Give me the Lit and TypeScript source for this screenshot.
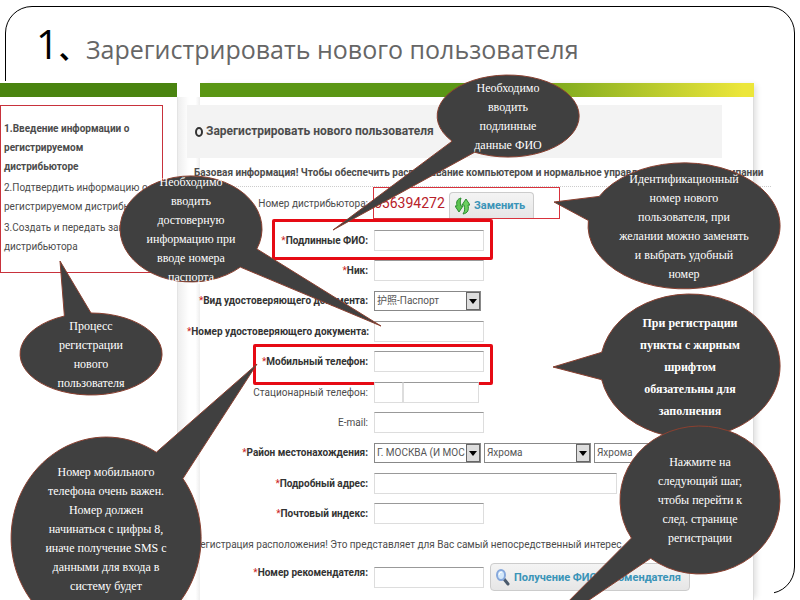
import { LitElement, html, css, svg, nothing } from "lit";
import { customElement } from "lit/decorators.js";
import { classMap } from "lit/directives/class-map.js";

interface Callout {
  cx: number;
  cy: number;
  rx: number;
  ry: number;
  tip: [number, number];
  from: number;
  to: number;
  textY: number;
  strong?: boolean;
  lines: string[];
}

const CALLOUTS: Callout[] = [
  { cx: 508, cy: 116, rx: 71, ry: 41, tip: [333, 230], from: 142, to: 118, textY: 117,
    lines: ["Необходимо", "вводить", "подлинные", "данные ФИО"] },
  { cx: 191, cy: 229, rx: 71, ry: 53, tip: [381, 326], from: 46, to: 22, textY: 230,
    lines: ["Необходимо", "вводить", "достоверную", "информацию при", "вводе номера", "паспорта"] },
  { cx: 91, cy: 354, rx: 71, ry: 41, tip: [60, 261], from: 248, to: 270, textY: 355,
    lines: ["Процесс", "регистрации", "нового", "пользователя"] },
  { cx: 106, cy: 538, rx: 95, ry: 101, tip: [257, 364], from: 302, to: 324, textY: 529,
    lines: ["Номер мобильного", "телефона очень важен.", "Номер должен", "начинаться с цифры 8,",
      "иначе получение SMS с", "данными для входа в", "систему будет"] },
  { cx: 684, cy: 226, rx: 96, ry: 63, tip: [554, 202], from: 185, to: 208, textY: 227,
    lines: ["Идентификационный", "номер нового", "пользователя, при", "желании можно заменять",
      "и выбрать удобный", "номер"] },
  { cx: 690, cy: 366, rx: 90, ry: 72, tip: [553, 367], from: 169, to: 191, textY: 367, strong: true,
    lines: ["При регистрации", "пункты с жирным", "шрифтом", "обязательны для", "заполнения"] },
  { cx: 700, cy: 500, rx: 80, ry: 74, tip: [530, 640], from: 149, to: 128, textY: 500,
    lines: ["Нажмите на", "следующий шаг,", "чтобы перейти к", "след. странице", "регистрации"] },
];

/* Outline of an ellipse whose rim opens between two angles into a pointed tail. */
function calloutPath(c: Callout): string {
  const at = (deg: number) => {
    const a = (deg * Math.PI) / 180;
    return `${(c.cx + c.rx * Math.cos(a)).toFixed(1)} ${(c.cy + c.ry * Math.sin(a)).toFixed(1)}`;
  };
  const lo = Math.min(c.from, c.to);
  const hi = Math.max(c.from, c.to);
  return `M${c.tip[0]} ${c.tip[1]} L${at(hi)} A${c.rx} ${c.ry} 0 1 1 ${at(lo)} Z`;
}

@customElement("callout-layer")
export class CalloutLayer extends LitElement {
  static styles = css`
    :host {
      position: absolute;
      inset: 0;
      overflow: hidden;
      pointer-events: none;
    }
    .shapes {
      position: absolute;
      inset: 0;
      width: 100%;
      height: 100%;
    }
    .shape {
      fill: #404040;
      stroke: #8a4030;
      stroke-width: 1;
    }
    .note {
      position: absolute;
      transform: translate(-50%, -50%);
      color: #fff;
      font: 12px/19px "Liberation Serif", serif;
      text-align: center;
      white-space: nowrap;
    }
    .strong {
      line-height: 22px;
      font-weight: bold;
    }
    .line {
      display: block;
    }
  `;

  render() {
    return CALLOUTS.map(
      (c) => html`
        <svg class="shapes" aria-hidden="true">${svg`<path class="shape" d=${calloutPath(c)}></path>`}</svg>
        <div class=${classMap({ note: true, strong: !!c.strong })} style="left:${c.cx}px;top:${c.textY}px">
          ${c.lines.map((l) => html`<span class="line">${l}</span>`)}
        </div>
      `
    );
  }
}

@customElement("app-root")
export class AppRoot extends LitElement {
  static styles = css`
    :host {
      display: block;
      position: relative;
      height: 100vh;
      min-height: 600px;
      overflow: hidden;
      background: #fff;
      color: #4c4c4c;
      font: 10px/19px Roboto, sans-serif;
    }
    * {
      box-sizing: border-box;
    }
    .frame {
      position: absolute;
      inset: 6px 5px;
      border: 1px solid #000;
      border-radius: 27px;
    }
    .head {
      position: relative;
      display: flex;
      align-items: center;
      height: 81px;
      padding: 12px 36px 0;
    }
    .title {
      margin: 0;
      display: flex;
      align-items: baseline;
      font: 25px/44px "Open Sans", sans-serif;
      color: #666;
      white-space: nowrap;
    }
    .num {
      width: 50px;
      color: #000;
      font-size: 40px;
    }
    .mark {
      font-family: "Noto Sans CJK SC", sans-serif;
      font-size: 26px;
      font-weight: bold;
    }
    .sheet {
      position: relative;
      display: flex;
      align-items: stretch;
      min-height: 519px;
      margin-right: 26px;
      padding-top: 2px;
      background: #fff;
    }
    .side {
      width: 177px;
      flex: none;
    }
    .sidebar {
      height: 14px;
      background: #4a8410;
    }
    .steps {
      list-style: none;
      margin: 8px 0 0;
      width: 163px;
      height: 168px;
      padding: 13px 3px;
      display: flex;
      flex-direction: column;
      gap: 2px;
      border: 1px solid #c8323c;
      white-space: nowrap;
    }
    .current {
      font-weight: bold;
    }
    .gutter {
      width: 23px;
      flex: none;
      margin-top: 14px;
      border-left: 1px solid #e4e4e4;
      background: linear-gradient(90deg, #eee, #fff 50%, #fff 80%, #eee);
    }
    .main {
      flex: 1;
      min-width: 0;
      margin-right: 20px;
      border-right: 1px solid #ddd;
      box-shadow: 4px 0 6px -2px #ddd;
    }
    .bar {
      height: 14px;
      margin-right: -1px;
      background: linear-gradient(90deg, #5a9614, #5a9614 52%, #ece63a 98%);
    }
    .form {
      margin: 8px 0 0 -13px;
    }
    .heading {
      margin: 0 31px 0 0;
      height: 53px;
      padding-left: 8px;
      display: flex;
      align-items: center;
      gap: 3px;
      background: #f3f3f3;
      font-size: 12px;
      white-space: nowrap;
    }
    .ring {
      width: 8px;
      height: 10px;
      border: 2px solid #333;
      border-radius: 50%;
    }
    .info {
      height: 29px;
      margin: 0 -18px 0 7px;
      line-height: 29px;
      border-bottom: 1px dotted #ccc;
      font-weight: bold;
      white-space: nowrap;
    }
    .row {
      display: flex;
      align-items: center;
      gap: 6px;
      position: relative;
    }
    .label {
      width: 181px;
      flex: none;
      text-align: right;
      white-space: nowrap;
    }
    .req {
      font-weight: bold;
      color: #333;
    }
    .star {
      color: #c22;
      font-weight: normal;
    }
    .rows {
      display: grid;
      grid-template-rows: repeat(10, 1fr);
      height: 304px;
      margin-top: 6px;
    }
    .idrow {
      height: 32px;
    }
    .idbox {
      width: 187px;
      height: 32px;
      display: flex;
      align-items: center;
      gap: 3px;
      border: 1px solid #d8323c;
      margin-left: -1px;
    }
    .id {
      width: 72px;
      font-size: 14px;
      color: #b8202a;
    }
    .btn {
      display: flex;
      align-items: center;
      gap: 4px;
      height: 28px;
      padding: 0 8px 0 5px;
      border: 1px solid #ccc;
      border-radius: 4px;
      background: linear-gradient(#f4f4f4, #e6e6e6);
      color: #3a94b8;
      font: bold 11px/19px Roboto, sans-serif;
      white-space: nowrap;
    }
    .small {
      height: 26px;
      align-self: flex-end;
      border-bottom: 0;
      border-radius: 4px 4px 0 0;
    }
    .field {
      width: 110px;
      height: 21px;
      border: 1px solid #ddd;
      border-top-color: #999;
      background: #fff;
      padding: 0 3px;
      font: inherit;
    }
    .wide {
      width: 243px;
    }
    .code {
      width: 29px;
      margin-right: -6px;
    }
    .line {
      width: 76px;
    }
    .pick {
      position: relative;
      display: flex;
      width: 107px;
      margin-right: -3px;
    }
    .select {
      appearance: none;
      width: 100%;
      height: 20px;
      padding: 0 15px 0 2px;
      border: 1px solid #888;
      border-radius: 0;
      background: #fff;
      color: #555;
      font: 10px/18px Roboto, "Noto Sans CJK SC", sans-serif;
    }
    .arrow {
      position: absolute;
      right: 1px;
      top: 1px;
      width: 14px;
      height: 18px;
      border: 1px solid #666;
      background: #ddd;
    }
    .box {
      position: absolute;
      top: -6px;
      left: 85px;
      width: 221px;
      height: 41px;
      border: 3px solid #e60a14;
      border-radius: 2px;
      pointer-events: none;
    }
    .boxwide {
      top: -3px;
      left: 66px;
      width: 240px;
    }
    .notice {
      margin: 0 0 0 7px;
      line-height: 32px;
      white-space: nowrap;
    }
    .ref {
      height: 32px;
    }
    .ref .label {
      align-self: flex-start;
      line-height: 24px;
    }
  `;

  private label(id: string, text: string, req = true) {
    return html`<label class=${classMap({ label: true, req })} for=${id}
      >${req ? html`<span class="star">*</span>` : nothing}${text}</label
    >`;
  }

  private field(id: string, text: string, req = true, wide = false) {
    return html`<div class="row">
      ${this.label(id, text, req)}<input id=${id} class=${classMap({ field: true, wide })} type="text" />
    </div>`;
  }

  private pick(id: string, value: string, name: string) {
    return html`<span class="pick">
      <select class="select" id=${id} aria-label=${name}><option>${value}</option></select>
      <svg class="arrow" viewBox="0 0 12 16" aria-hidden="true"><path d="M2 6h8l-4 5z" fill="#000" /></svg>
    </span>`;
  }

  render() {
    return html`
      <div class="frame"></div>
      <header class="head">
        <h1 class="title">
          <span class="num">1<span class="mark">、</span></span>Зарегистрировать нового пользователя
        </h1>
      </header>
      <div class="sheet">
        <aside class="side">
          <div class="sidebar"></div>
          <ol class="steps">
            <li class="current">1.Введение информации о<br />регистрируемом<br />дистрибьюторе</li>
            <li>2.Подтвердить информацию о<br />регистрируемом дистрибьюторе</li>
            <li>3.Создать и передать заказ<br />дистрибьютора</li>
          </ol>
        </aside>
        <div class="gutter"></div>
        <main class="main">
          <div class="bar"></div>
          <form class="form">
            <h2 class="heading"><span class="ring"></span>Зарегистрировать нового пользователя</h2>
            <div class="info">
              Базовая информация! Чтобы обеспечить распознавание компьютером и нормальное управление данными о компании
            </div>
            <div class="row idrow">
              <span class="label">Номер дистрибьютора:</span>
              <div class="idbox">
                <span class="id">656394272</span>
                <button class="btn small" type="button">
                  <svg width="15" height="18" viewBox="0 0 15 18" aria-hidden="true">
                    <path d="M6 1C2 2 1 5 2 9L0 9l4 6 4-6-2 0C5 6 5 4 6 1z" fill="#5cc450" stroke="#2c8c30" stroke-linejoin="round" />
                    <path d="M8 17c5-1 6-4 5-9l2 0-4-6-4 6 2 0c1 4 1 6-1 9z" fill="#6cd060" stroke="#2c8c30" stroke-linejoin="round" />
                  </svg>
                  Заменить
                </button>
              </div>
            </div>
            <div class="rows">
              <div class="row">
                ${this.label("fio", "Подлинные ФИО:")}<input id="fio" class="field" type="text" />
                <span class="box"></span>
              </div>
              ${this.field("nick", "Ник:")}
              <div class="row">
                ${this.label("doc", "Вид удостоверяющего документа:")}${this.pick("doc", "护照-Паспорт", "Вид документа")}
              </div>
              ${this.field("docnum", "Номер удостоверяющего документа:")}
              <div class="row">
                ${this.label("mobile", "Мобильный телефон:")}<input id="mobile" class="field" type="text" />
                <span class="box boxwide"></span>
              </div>
              <div class="row">
                ${this.label("tel", "Стационарный телефон:", false)}
                <input id="tel" class="field code" type="text" />
                <input class="field line" type="text" aria-label="Номер" />
              </div>
              ${this.field("email", "E-mail:", false)}
              <div class="row">
                ${this.label("region", "Район местонахождения:")}${this.pick("region", "Г. МОСКВА (И МОС", "Регион")}
                ${this.pick("city", "Яхрома", "Город")}${this.pick("town", "Яхрома", "Населённый пункт")}
              </div>
              ${this.field("address", "Подробный адрес:", true, true)}
              ${this.field("zip", "Почтовый индекс:")}
            </div>
            <p class="notice">Регистрация расположения! Это представляет для Вас самый непосредственный интерес</p>
            <div class="row ref">
              ${this.label("ref", "Номер рекомендателя:")}<input id="ref" class="field" type="text" />
              <button class="btn" type="button">
                <svg width="14" height="18" viewBox="0 0 14 18" aria-hidden="true">
                  <path d="M8 11l4 5" stroke="#4a5a6c" stroke-width="3" stroke-linecap="round" />
                  <ellipse cx="5" cy="7" rx="4" ry="5" fill="#d4e8fa" stroke="#86a8dc" stroke-width="2" />
                  <path d="M3 7a3 3 0 0 1 3-3" fill="none" stroke="#fff" />
                </svg>
                Получение ФИО рекомендателя
              </button>
            </div>
          </form>
        </main>
      </div>
      <callout-layer></callout-layer>
    `;
  }
}
